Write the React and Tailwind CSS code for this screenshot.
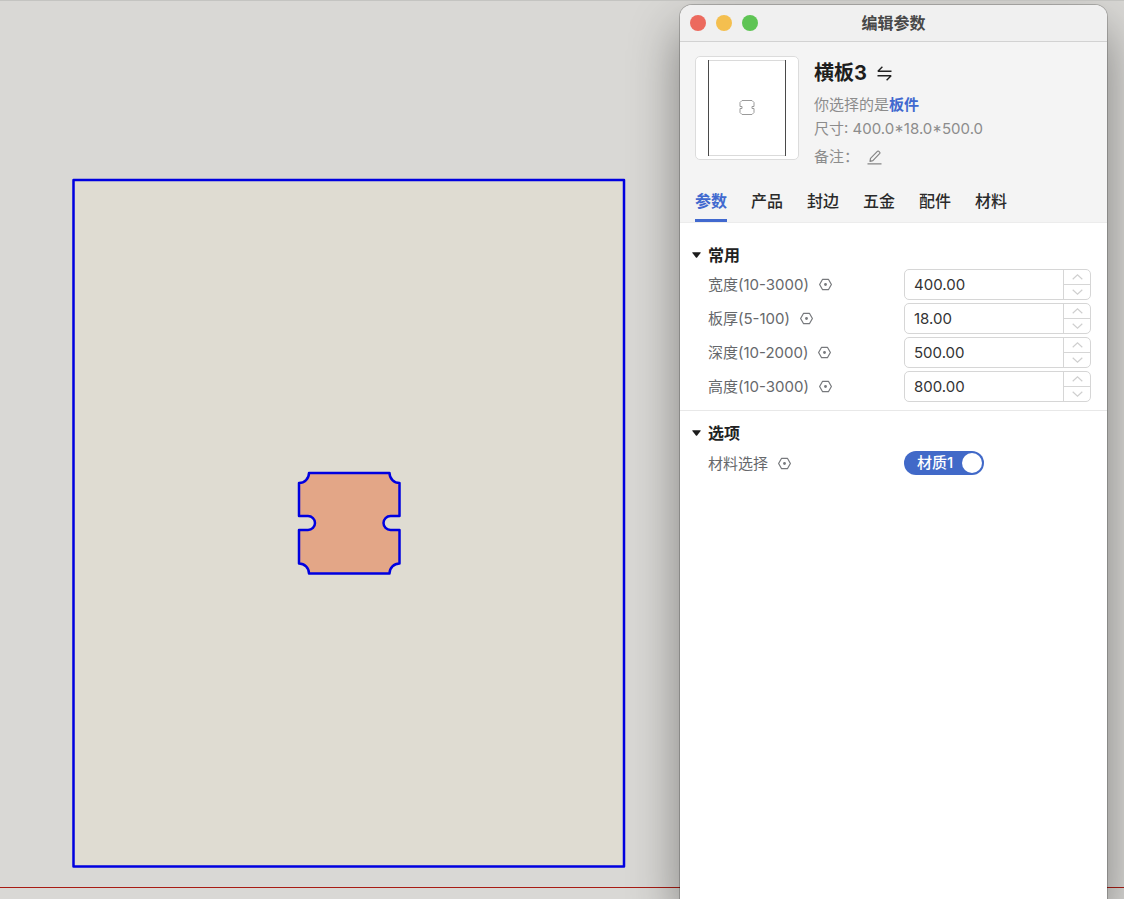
import { useState } from 'react';

const TABS = ['参数', '产品', '封边', '五金', '配件', '材料'];

const FIELDS = [
  { id: 'width', label: '宽度(10-3000)', value: '400.00' },
  { id: 'thickness', label: '板厚(5-100)', value: '18.00' },
  { id: 'depth', label: '深度(10-2000)', value: '500.00' },
  { id: 'height', label: '高度(10-3000)', value: '800.00' },
];

function HexIcon() {
  return (
    <svg className="h-[13px] w-[13px] shrink-0 text-[#77797d]" viewBox="0 0 13 13" fill="none" aria-hidden="true">
      <path d="M3.6 1.3h5.8l3 5.2-3 5.2H3.6l-3-5.2Z" stroke="currentColor" strokeWidth="1.2" strokeLinejoin="round" />
      <circle cx="6.5" cy="6.5" r="1.4" fill="currentColor" />
    </svg>
  );
}

function Chevron({ up }) {
  return (
    <svg className="h-[6px] w-[11px]" viewBox="0 0 11 6" fill="none" aria-hidden="true">
      <path d={up ? 'M.7 5.2 5.5.9l4.8 4.3' : 'M.7.8l4.8 4.3L10.3.8'} stroke="#cfcfcf" strokeWidth="1.2" />
    </svg>
  );
}

function Section({ title, children }) {
  const [open, setOpen] = useState(true);
  return (
    <section>
      <h2>
        <button
          type="button"
          aria-expanded={open}
          onClick={() => setOpen(!open)}
          className="flex h-7 items-center gap-[7px] pl-3 text-base font-bold text-[#222]"
        >
          <svg className="h-[6px] w-[9px]" viewBox="0 0 9 6" aria-hidden="true">
            <path d="M.6.3h7.8q.6.1.2.7L5.1 5.4q-.6.6-1.2 0L.4 1Q0 .4.6.3Z" fill="#1c1c1c" />
          </svg>
          {title}
        </button>
      </h2>
      {open && children}
    </section>
  );
}

function NumberField({ field }) {
  const [value, setValue] = useState(field.value);
  const step = (delta) => setValue((Number(value) + delta).toFixed(2));

  return (
    <div className="grid grid-cols-[196px_1fr] items-center pr-4 pl-7">
      <div className="flex items-center gap-[10px]">
        <label htmlFor={field.id} className="pt-[2px] text-[15px] text-[#66686b]">{field.label}</label>
        <HexIcon />
      </div>
      <div className="flex h-[31px] overflow-hidden rounded-[5px] border border-[#d6d6d6]">
        <input
          id={field.id}
          type="text"
          value={value}
          onChange={(e) => setValue(e.target.value)}
          className="min-w-0 flex-1 px-[9px] pt-[2px] text-[15px] text-[#333] outline-none"
        />
        <div className="flex w-[27px] flex-col border-l border-[#d6d6d6]">
          <button
            type="button"
            aria-label="增加"
            onClick={() => step(1)}
            className="flex flex-1 items-center justify-center border-b border-[#d6d6d6]"
          >
            <Chevron up />
          </button>
          <button
            type="button"
            aria-label="减少"
            onClick={() => step(-1)}
            className="flex flex-1 items-center justify-center"
          >
            <Chevron />
          </button>
        </div>
      </div>
    </div>
  );
}

function BoardDrawing() {
  return (
    <svg className="h-[690px] w-[554px]" viewBox="0 0 554 690" strokeWidth="2.5" stroke="#0000e0" strokeLinejoin="round">
      <rect x="1.5" y="2" width="550.5" height="686.5" fill="#dfdcd2" />
      <path
        d="M237 295H317.5A10 10 0 0 0 327.5 305V338H318.5A7 7 0 0 0 318.5 352H327.5V385.5A10 10 0 0 0 317.5 395.5H237A10 10 0 0 0 227 385.5V352H236A7 7 0 0 0 236 338H227V305A10 10 0 0 0 237 295Z"
        fill="#e3a687"
      />
    </svg>
  );
}

function Thumbnail() {
  return (
    <div className="h-[104px] w-[104px] shrink-0 rounded-[5px] border border-[#dcdcdc] bg-white">
      <svg viewBox="0 0 102 102" fill="none">
        <path d="M12 3.5h78M12 98.5h78" stroke="#dadada" />
        <path d="M12.5 3v96M89.5 3v96" stroke="#4a4a4a" />
        <path d="M46 43.5h10l2 2v4h-2v2h2v4l-2 2H46l-2-2v-4h2v-2h-2v-4Z" stroke="#9a9a9a" />
      </svg>
    </div>
  );
}

function EditWindow() {
  const [tab, setTab] = useState('参数');
  const [material, setMaterial] = useState(true);

  return (
    <div className="absolute top-1 right-[17px] bottom-0 w-[427px] overflow-hidden rounded-t-xl bg-white shadow-[0_0_0_1px_rgba(0,0,0,0.2),0_24px_50px_rgba(0,0,0,0.42)]">
      <div className="relative flex h-[37px] items-center justify-center border-b border-[#d2d2d2] bg-[#f0f0f0]">
        <div className="absolute left-[10px] flex gap-[10px]">
          <button type="button" aria-label="关闭" className="h-4 w-4 rounded-full bg-[#ec6a5e]" />
          <button type="button" aria-label="最小化" className="h-4 w-4 rounded-full bg-[#f4bf4f]" />
          <button type="button" aria-label="缩放" className="h-4 w-4 rounded-full bg-[#5ec454]" />
        </div>
        <h1 className="text-base font-bold text-[#484848]">编辑参数</h1>
      </div>

      <header className="border-b border-[#ececec] bg-[#f4f4f4] pt-[14px]">
        <div className="flex gap-[15px] px-[15px]">
          <Thumbnail />
          <div className="pt-[5px] text-[15px] leading-6 text-[#8c8c8c]">
            <div className="flex items-center gap-[10px]">
              <span className="text-[20px] font-bold text-[#1e1e1e]">横板3</span>
              <button type="button" aria-label="切换">
                <svg className="h-[15px] w-[15px]" viewBox="0 0 15 15" fill="none" stroke="#222" strokeWidth="1.4">
                  <path d="M5.4.8.9 5.3h13.6M.5 9.8h13.6l-4.5 4.5" strokeLinejoin="bevel" />
                </svg>
              </button>
            </div>
            <div className="mt-2">你选择的是<span className="font-bold text-[#4169cf]">板件</span></div>
            <div>尺寸: 400.0*18.0*500.0</div>
            <div className="mt-1 flex items-center gap-2">
              <span>备注：</span>
              <button type="button" aria-label="编辑备注">
                <svg className="h-[15px] w-[15px]" viewBox="0 0 15 15" fill="none" stroke="#858585" strokeWidth="1.2">
                  <path d="M.5 13.9h14M3 11.4l.5-3.1L10.6 1.2q.5-.4 1 0l1.2 1.2q.4.5 0 1L5.9 10.6Z" strokeLinejoin="round" />
                </svg>
              </button>
            </div>
          </div>
        </div>
        <nav className="mt-[13px] flex gap-6 px-[15px]">
          {TABS.map((name) => (
            <button
              key={name}
              type="button"
              onClick={() => setTab(name)}
              className={
                name === tab
                  ? 'h-10 border-b-3 border-[#4169cf] text-base font-bold text-[#4169cf]'
                  : 'h-10 border-b-3 border-transparent text-base font-medium text-[#2a2a2a]'
              }
            >
              {name}
            </button>
          ))}
        </nav>
      </header>

      <div className="border-b border-[#e8e8e8] pt-[18px] pb-2">
        <Section title="常用">
          <div className="flex flex-col gap-[3px]">
            {FIELDS.map((f) => (
              <NumberField key={f.id} field={f} />
            ))}
          </div>
        </Section>
      </div>

      <div className="pt-2">
        <Section title="选项">
          <div className="grid h-8 grid-cols-[196px_1fr] items-center pr-4 pl-7">
            <div className="flex items-center gap-[10px]">
              <label htmlFor="material" className="pt-[2px] text-[15px] text-[#66686b]">材料选择</label>
              <HexIcon />
            </div>
            <label className="flex h-6 w-20 items-center justify-between rounded-full bg-[#4169c8] pr-[2px] pl-[13px] text-[15px] font-medium text-white">
              <input
                id="material"
                type="checkbox"
                checked={material}
                onChange={(e) => setMaterial(e.target.checked)}
                className="sr-only"
              />
              材质1
              <span className="h-5 w-5 rounded-full bg-white" />
            </label>
          </div>
        </Section>
      </div>
    </div>
  );
}

export default function App() {
  return (
    <div className="relative min-h-screen overflow-hidden border-t border-[#c4c4c1] bg-[#d9d8d5] font-['Inter','Noto_Sans_CJK_SC',sans-serif]">
      <div className="pt-[177px] pl-[72px]">
        <BoardDrawing />
      </div>
      <div className="absolute inset-x-0 bottom-[11px] h-px bg-[#a81c14]" />
      <EditWindow />
    </div>
  );
}
